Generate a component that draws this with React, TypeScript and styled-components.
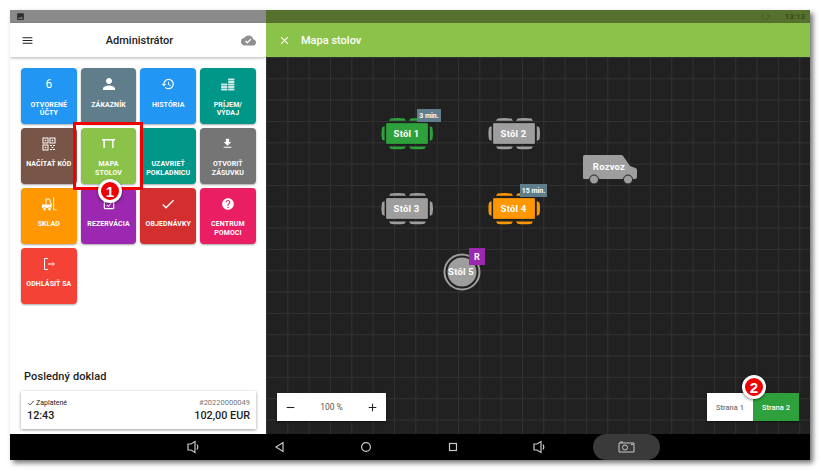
import React from "react";
import styled, { createGlobalStyle } from "styled-components";
import { MdMenu, MdCloudDone, MdPerson, MdHistory, MdFileDownload, MdCheck, MdHelp, MdClose, MdAdd, MdRemove, MdImage, MdEventAvailable } from "react-icons/md";

const Global = createGlobalStyle`
  html, body { margin: 0; padding: 0; background: #fff; }
  body { width: 821px; height: 471px; overflow: hidden; font-family: Roboto, "Noto Sans", sans-serif; }
`;

const Page = styled.div`
  padding: 10px 0 0 10px;
`;
const Device = styled.div`
  position: relative;
  width: 800px;
  height: 450px;
  display: grid;
  grid-template-columns: 256px 544px;
  grid-template-rows: 424px 26px;
  box-shadow: 3px 3px 5px rgba(0, 0, 0, 0.55);
`;
const Side = styled.section`
  display: flex;
  flex-direction: column;
  background: #fff;
  overflow: hidden;
`;
const Main = styled.section`
  display: flex;
  flex-direction: column;
  overflow: hidden;
`;
const StatusBar = styled.div<{ $bg: string }>`
  height: 13px;
  flex: none;
  background: ${(p) => p.$bg};
  display: flex;
  align-items: center;
  padding: 0 5px 0 6px;
`;
const StatusRight = styled.div`
  margin-left: auto;
  display: flex;
  align-items: center;
  gap: 15px;
  font-size: 8px;
  font-weight: 500;
  color: #34451a;
`;
const SideBar = styled.header`
  height: 34px;
  flex: none;
  display: flex;
  align-items: center;
  justify-content: space-between;
  padding: 0 10px 0 11px;
  box-shadow: 0 1px 3px rgba(0, 0, 0, 0.3);
  color: #222;
`;
const SideTitle = styled.div`
  font-size: 11px;
  font-weight: 500;
  margin-left: 4px;
`;
const Tiles = styled.div`
  display: grid;
  grid-template-columns: repeat(4, 55.7px);
  grid-auto-rows: 55.7px;
  gap: 4.3px 4px;
  padding: 11px 0 0 11px;
`;
const Tile = styled.div<{ $bg: string }>`
  background: ${(p) => p.$bg};
  border-radius: 4px;
  box-shadow: 0 1px 2px rgba(0, 0, 0, 0.35);
  color: #fff;
  display: flex;
  flex-direction: column;
  align-items: center;
  padding-top: 7px;
  box-sizing: border-box;
  text-align: center;
`;
const TileIcon = styled.div`
  height: 18px;
  display: flex;
  align-items: center;
  justify-content: center;
  font-size: 12px;
  font-weight: 400;
  margin-bottom: 7.5px;
`;
const TileLabel = styled.div`
  font-size: 7px;
  line-height: 8.5px;
  font-weight: 700;
  letter-spacing: 0.1px;
  white-space: pre-line;
`;
const Receipt = styled.div`
  margin-top: auto;
  flex: none;
`;
const ReceiptTitle = styled.div`
  font-size: 11px;
  font-weight: 500;
  color: #222;
  padding-left: 14px;
  margin-bottom: 8px;
  letter-spacing: 0.1px;
`;
const ReceiptCard = styled.div`
  margin: 0 10px 5px 11px;
  height: 38px;
  box-sizing: border-box;
  padding: 7px 6px 0 6px;
  background: #fff;
  box-shadow: 0 1px 3px rgba(0, 0, 0, 0.4);
  color: #222;
`;
const ReceiptRow = styled.div`
  display: flex;
  align-items: center;
  justify-content: space-between;
`;
const Paid = styled.span`
  font-size: 7px;
  display: flex;
  align-items: center;
  gap: 1px;
`;
const DocNo = styled.span`
  font-size: 7.5px;
  color: #777;
`;
const Big = styled.span`
  font-size: 10.8px;
  font-weight: 500;
  line-height: 18px;
`;
const MainBar = styled.header`
  height: 34px;
  flex: none;
  background: #8bc34a;
  color: #fff;
  display: flex;
  align-items: center;
  gap: 10px;
  padding-left: 12px;
  font-size: 11px;
  font-weight: 500;
`;
const Canvas = styled.div`
  position: relative;
  flex: 1;
  background-color: #212121;
  background-image:
    linear-gradient(to right, #323232 1px, transparent 1px),
    linear-gradient(to bottom, #323232 1px, transparent 1px);
  background-size: 21.33px 21.33px;
`;
const Node = styled.div<{ $x: number; $y: number; $w: number; $h: number }>`
  position: absolute;
  left: ${(p) => p.$x}px;
  top: ${(p) => p.$y}px;
  width: ${(p) => p.$w}px;
  height: ${(p) => p.$h}px;
  display: flex;
  align-items: center;
  justify-content: center;
  color: #fff;
  font-size: 9.5px;
  font-weight: 700;
`;
const NodeArt = styled.svg`
  position: absolute;
  inset: 0;
  width: 100%;
  height: 100%;
  overflow: visible;
`;
const NodeText = styled.span<{ $dy?: number }>`
  position: relative;
  top: ${(p) => p.$dy ?? -1}px;
  left: -1px;
  letter-spacing: 0.2px;
`;
const TimeTag = styled.div<{ $x: number; $y: number; $w: number }>`
  position: absolute;
  left: ${(p) => p.$x}px;
  top: ${(p) => p.$y}px;
  width: ${(p) => p.$w}px;
  height: 13px;
  background: #607d8b;
  color: #fff;
  font-size: 7px;
  font-weight: 700;
  display: flex;
  align-items: center;
  justify-content: center;
`;
const ReservedTag = styled.div`
  position: absolute;
  left: 203px;
  top: 191px;
  width: 16px;
  height: 17px;
  background: #9c27b0;
  color: #fff;
  font-size: 9px;
  font-weight: 700;
  display: flex;
  align-items: center;
  justify-content: center;
`;
const ZoomBox = styled.div`
  position: absolute;
  left: 11px;
  bottom: 13px;
  width: 109px;
  height: 28px;
  box-sizing: border-box;
  padding: 0 7px;
  background: #fff;
  box-shadow: 0 1px 2px rgba(0, 0, 0, 0.5);
  display: flex;
  align-items: center;
  justify-content: space-between;
  font-size: 8.5px;
  color: #555;
`;
const Pager = styled.div`
  position: absolute;
  right: 11px;
  bottom: 13px;
  display: flex;
  height: 28px;
  box-shadow: 0 1px 2px rgba(0, 0, 0, 0.5);
`;
const PageBtn = styled.div<{ $active?: boolean }>`
  width: 46px;
  background: ${(p) => (p.$active ? "#2ea03c" : "#fff")};
  color: ${(p) => (p.$active ? "#fff" : "#777")};
  font-size: 7.5px;
  font-weight: 500;
  display: flex;
  align-items: center;
  justify-content: center;
`;
const Nav = styled.nav`
  grid-column: 1 / -1;
  background: #000;
  display: flex;
  padding-left: 140px;
`;
const NavItem = styled.div`
  width: 86.5px;
  display: flex;
  align-items: center;
  justify-content: center;
`;
const Pill = styled.div`
  width: 67px;
  height: 26px;
  margin-left: 10px;
  border-radius: 13px;
  background: #3a3a3a;
  display: flex;
  align-items: center;
  justify-content: center;
`;
const RedFrame = styled.div`
  position: absolute;
  left: 63px;
  top: 112px;
  width: 70px;
  height: 68px;
  box-sizing: border-box;
  border: 3px solid #f00000;
`;
const Callout = styled.div<{ $x: number; $y: number }>`
  position: absolute;
  left: ${(p) => p.$x}px;
  top: ${(p) => p.$y}px;
  width: 18px;
  height: 18px;
  border-radius: 50%;
  background: #f00000;
  border: 3px solid #fff;
  box-shadow: 0 1px 3px rgba(0, 0, 0, 0.5);
  color: #fff;
  font-family: "Liberation Sans", sans-serif;
  font-weight: 700;
  font-size: 15px;
  display: flex;
  align-items: center;
  justify-content: center;
`;

const TableIcon = () => (
  <svg width="15" height="15" viewBox="0 0 15 15" fill="#fff">
    <path d="M1 3h13v1.600h-1.400V12h-1.500V4.600H3.900V12H2.400V4.600H1z" />
  </svg>
);
const CoinsIcon = () => (
  <svg width="15" height="15" viewBox="0 0 15 15" fill="#fff" opacity=".8">
    {[1.5, 4, 6.5, 9, 11.5].map((y) => (
      <rect key={y} x="8" y={y} width="6.500" height="2" rx=".8" />
    ))}
    {[6.5, 9, 11.5].map((y) => (
      <rect key={y} x="1" y={y} width="6.500" height="2" rx=".8" />
    ))}
  </svg>
);
const QrIcon = () => (
  <svg width="14" height="14" viewBox="0 0 14 14" fill="none" stroke="#fff" strokeWidth="1">
    <rect x="1" y="1" width="5" height="5" />
    <rect x="8" y="1" width="5" height="5" />
    <rect x="1" y="8" width="5" height="5" />
    <rect x="3" y="3" width="1" height="1" fill="#fff" strokeWidth=".4" />
    <rect x="10" y="3" width="1" height="1" fill="#fff" strokeWidth=".4" />
    <rect x="3" y="10" width="1" height="1" fill="#fff" strokeWidth=".4" />
    <path d="M8 8.500h2M11 8.500h2M9.500 10.500h2M8 12.500h2M11 12.500h2" strokeWidth="1.200" />
  </svg>
);
const ForkliftIcon = () => (
  <svg width="16" height="16" viewBox="0 0 16 16">
    <path fill="none" stroke="#fff" strokeWidth="1" d="M5 8V3h3.500L10.500 9" />
    <path fill="#fff" d="M1 8.500h9.500V12H1z" />
    <circle cx="3.500" cy="13" r="1.700" fill="#fff" stroke="#ff9800" strokeWidth=".6" />
    <circle cx="8.500" cy="13" r="1.700" fill="#fff" stroke="#ff9800" strokeWidth=".6" />
    <path fill="#fff" d="M12.200 1h.9v12.400h2.700v.9h-3.600z" />
  </svg>
);
const LogoutIcon = () => (
  <svg width="14" height="14" viewBox="0 0 14 14" fill="none" stroke="#fff" strokeWidth="1">
    <path d="M6 1.500H2.500v11H6" />
    <path d="M6 7h6M10.500 5.500 12.300 7l-1.800 1.500" />
  </svg>
);

const tiles: { bg: string; label: string; icon: React.ReactNode }[] = [
  { bg: "#2196f3", label: "OTVORENÉ\nÚČTY", icon: <span>6</span> },
  { bg: "#607d8b", label: "ZÁKAZNÍK", icon: <MdPerson size={18} /> },
  { bg: "#2196f3", label: "HISTÓRIA", icon: <MdHistory size={14} /> },
  { bg: "#009688", label: "PRÍJEM/\nVÝDAJ", icon: <CoinsIcon /> },
  { bg: "#795548", label: "NAČÍTAŤ KÓD", icon: <QrIcon /> },
  { bg: "#8bc34a", label: "MAPA\nSTOLOV", icon: <TableIcon /> },
  { bg: "#009688", label: "UZAVRIEŤ\nPOKLADNICU", icon: null },
  { bg: "#757575", label: "OTVORIŤ\nZÁSUVKU", icon: <MdFileDownload size={13} /> },
  { bg: "#ff9800", label: "SKLAD", icon: <ForkliftIcon /> },
  { bg: "#9c27b0", label: "REZERVÁCIA", icon: <MdEventAvailable size={14} /> },
  { bg: "#d32f2f", label: "OBJEDNÁVKY", icon: <MdCheck size={16} /> },
  { bg: "#e91e63", label: "CENTRUM\nPOMOCI", icon: <MdHelp size={14} /> },
  { bg: "#f44336", label: "ODHLÁSIŤ SA", icon: <LogoutIcon /> },
];

const TableArt = ({ color }: { color: string }) => (
  <NodeArt viewBox="0 0 53 32">
    <g fill={color}>
      <rect x="5" y="5" width="42" height="21" rx="1" />
      <path d="M8 2.800 9.500 .6Q16.500-.4 23.500.6L25 2.800zM28 2.800 29.500.6Q36.500-.4 43.500.6L45 2.800z" />
      <path d="M8 28.400 9.500 30.800Q16.500 31.800 23.500 30.800L25 28.400zM28 28.400 29.500 30.800Q36.500 31.800 43.500 30.800L45 28.400z" />
      <path d="M3.600 8 1 9.500Q-.2 15.500 1 21.500L3.600 23zM48.800 8 51.400 9.500Q52.600 15.500 51.400 21.500L48.800 23z" />
    </g>
    <rect x="5" y="5" width="42" height="21" rx="1" fill="none" stroke="#000" strokeOpacity=".3" strokeWidth=".6" />
  </NodeArt>
);

const Speaker = () => (
  <svg width="12" height="14" viewBox="0 0 12 14" fill="none" stroke="#c8c8c8" strokeWidth="1.200">
    <path d="M1 4h3l4-2.500v11L4 10H1z" />
    <path d="M10 4.500q1.500 2.500 0 5" />
  </svg>
);

export default function App() {
  return (
    <Page>
      <Global />
      <Device>
        <Side>
          <StatusBar $bg="#8a8a8a">
            <MdImage size={9} color="#2c2c2c" />
          </StatusBar>
          <SideBar>
            <MdMenu size={13} />
            <SideTitle>Administrátor</SideTitle>
            <MdCloudDone size={15} color="#8f8f8f" />
          </SideBar>
          <Tiles>
            {tiles.map((t) => (
              <Tile key={t.label} $bg={t.bg}>
                <TileIcon>{t.icon}</TileIcon>
                <TileLabel>{t.label}</TileLabel>
              </Tile>
            ))}
          </Tiles>
          <Receipt>
            <ReceiptTitle>Posledný doklad</ReceiptTitle>
            <ReceiptCard>
              <ReceiptRow>
                <Paid>
                  <MdCheck size={8} />
                  Zaplatené
                </Paid>
                <DocNo>#20220000049</DocNo>
              </ReceiptRow>
              <ReceiptRow>
                <Big>12:43</Big>
                <Big>102,00 EUR</Big>
              </ReceiptRow>
            </ReceiptCard>
          </Receipt>
        </Side>
        <Main>
          <StatusBar $bg="#56702e">
            <StatusRight>
              <svg width="9" height="7" viewBox="0 0 9 7" fill="none" stroke="#3f5222" strokeWidth=".8">
                <path d="M3 .8.8 3.500 3 6.200M6 .8 8.200 3.500 6 6.200" />
              </svg>
              <span>13:13</span>
            </StatusRight>
          </StatusBar>
          <MainBar>
            <MdClose size={13} />
            Mapa stolov
          </MainBar>
          <Canvas>
            <Node $x={115} $y={61} $w={53} $h={32}>
              <TableArt color="#2ea03c" />
              <NodeText>Stôl 1</NodeText>
            </Node>
            <TimeTag $x={151} $y={52} $w={24}>3 min.</TimeTag>
            <Node $x={222} $y={61} $w={53} $h={32}>
              <TableArt color="#9e9e9e" />
              <NodeText>Stôl 2</NodeText>
            </Node>
            <Node $x={115} $y={136} $w={53} $h={32}>
              <TableArt color="#9e9e9e" />
              <NodeText>Stôl 3</NodeText>
            </Node>
            <Node $x={222} $y={136} $w={53} $h={32}>
              <TableArt color="#ff9800" />
              <NodeText>Stôl 4</NodeText>
            </Node>
            <TimeTag $x={254} $y={127} $w={27}>15 min.</TimeTag>
            <Node $x={317} $y={98} $w={54} $h={30}>
              <NodeArt viewBox="0 0 54 30">
                <path fill="#9e9e9e" d="M1.500 0H38q1.500 0 2.300 1.200L47 11l5.500 2q1.500.6 1.500 2V22q0 2-2 2H1.500Q0 24 0 22.500V1.500Q0 0 1.500 0z" />
                <circle cx="11" cy="24.500" r="4.500" fill="#9e9e9e" stroke="#212121" strokeWidth="1" />
                <circle cx="45" cy="24.500" r="4.500" fill="#9e9e9e" stroke="#212121" strokeWidth="1" />
              </NodeArt>
              <NodeText $dy={-4}>Rozvoz</NodeText>
            </Node>
            <Node $x={177} $y={196} $w={38} $h={38}>
              <NodeArt viewBox="0 0 38 38">
                <circle cx="19" cy="19" r="17.500" fill="none" stroke="#9e9e9e" strokeWidth="2" />
                <circle cx="19" cy="19" r="14.500" fill="#9e9e9e" />
              </NodeArt>
              <NodeText>Stôl 5</NodeText>
            </Node>
            <ReservedTag>R</ReservedTag>
            <ZoomBox>
              <MdRemove size={13} color="#222" />
              <span>100 %</span>
              <MdAdd size={13} color="#222" />
            </ZoomBox>
            <Pager>
              <PageBtn>Strana 1</PageBtn>
              <PageBtn $active>Strana 2</PageBtn>
            </Pager>
          </Canvas>
        </Main>
        <Nav>
          <NavItem><Speaker /></NavItem>
          <NavItem>
            <svg width="12" height="12" viewBox="0 0 12 12" fill="none" stroke="#c8c8c8" strokeWidth="1.200"><path d="M9 1.500v9L2 6z" /></svg>
          </NavItem>
          <NavItem>
            <svg width="12" height="12" viewBox="0 0 12 12" fill="none" stroke="#c8c8c8" strokeWidth="1.200"><circle cx="6" cy="6" r="4.400" /></svg>
          </NavItem>
          <NavItem>
            <svg width="12" height="12" viewBox="0 0 12 12" fill="none" stroke="#c8c8c8" strokeWidth="1.200"><rect x="2.500" y="2.500" width="7" height="7" /></svg>
          </NavItem>
          <NavItem><Speaker /></NavItem>
          <Pill>
            <svg width="17" height="12" viewBox="0 0 17 12" fill="none" stroke="#c8c8c8" strokeWidth="1"><path d="M1 2h15v9H1z" /><circle cx="7" cy="6.500" r="2.500" /><path d="M2 1h3M13 3.500h2" /></svg>
          </Pill>
        </Nav>
        <RedFrame />
        <Callout $x={88} $y={169}>1</Callout>
        <Callout $x={732} $y={365}>2</Callout>
      </Device>
    </Page>
  );
}
